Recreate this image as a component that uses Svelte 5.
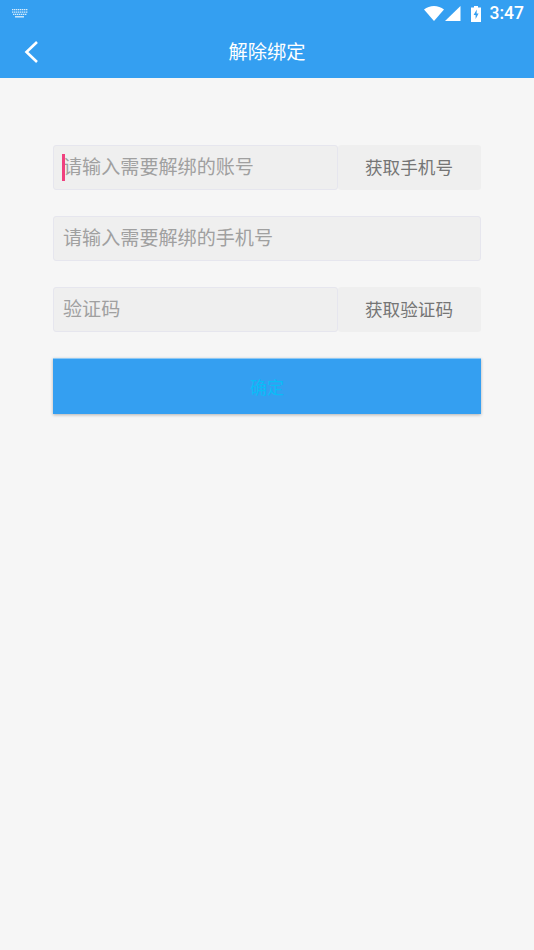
<script>
  const rows = [
    { text: '请输入需要解绑的账号', action: '获取手机号', caret: true },
    { text: '请输入需要解绑的手机号' },
    { text: '验证码', action: '获取验证码' }
  ];
</script>

<div class="page">
  <header class="head">
    <div class="status">
      <svg class="kbd" width="16" height="9" viewBox="0 0 16 9" aria-hidden="true">
        <g stroke="#fff" fill="none">
          <path d="M0 .7h16M0 3.2h16" stroke-width="1.3" stroke-dasharray="1.4 .6" opacity="0.8"/>
          <path d="M1 5.4h14" stroke-width="1.3" stroke-dasharray="1.4 .6" opacity="0.8"/>
          <path d="M3 7.8h9" stroke-width="1.4" opacity="0.8"/>
        </g>
      </svg>
      <div class="sys">
        <svg width="20" height="15" viewBox="0 0 20 15" aria-hidden="true"><path d="M0 3.6C2.9 1.2 6.3 0 10 0s7.1 1.2 10 3.6L10 15z" fill="#fff"/></svg>
        <svg width="16" height="15" viewBox="0 0 16 15" aria-hidden="true"><path d="M15.5 0v15H0z" fill="#fff"/></svg>
        <svg class="bat" width="10" height="16" viewBox="0 0 10 16" aria-hidden="true"><path fill-rule="evenodd" d="M3 0h4v1.5h3V16H0V1.5h3zM5.8 3.5 2.6 9h2v4l3-5.6H5.6z" fill="#fff"/></svg>
        <span class="time">3:47</span>
      </div>
    </div>
    <div class="nav">
      <svg class="back" width="16" height="24" viewBox="0 0 16 24" aria-hidden="true"><path d="M14 2 3.5 12 14 22" fill="none" stroke="#fff" stroke-width="2.6"/></svg>
      <h1>解除绑定</h1>
    </div>
  </header>

  <main class="form">
    {#each rows as row}
      <div class="row">
        <div class="field">
          {#if row.caret}<i class="caret"></i>{/if}
          <span class="label">{row.text}</span>
        </div>
        {#if row.action}<div class="action"><span class="label">{row.action}</span></div>{/if}
      </div>
    {/each}
    <div class="submit"><span class="label">确定</span></div>
  </main>
</div>

<style>
  :global(body) { margin: 0; background: #f6f6f6; }
  .page {
    min-height: 950px;
    background: #f6f6f6;
    font-family: "Noto Sans CJK SC", "Noto Sans", sans-serif;
  }
  .head { background: #349ff1; height: 78px; color: #fff; }
  .status {
    height: 27px;
    display: flex;
    align-items: center;
    justify-content: space-between;
    padding: 0 10px 0 12px;
  }
  .kbd { margin-top: -1px; }
  .sys { display: flex; align-items: center; }
  .sys svg:nth-child(1) { margin-right: 1px; }
  .bat { margin-left: 10px; }
  .time {
    margin-left: 9px;
    font: 500 17.5px Roboto, sans-serif;
    line-height: 25px;
  }
  .nav {
    height: 51px;
    position: relative;
    display: flex;
    align-items: center;
    justify-content: center;
  }
  .back { position: absolute; left: 23px; top: 13px; }
  h1 { margin: 0 0 1px; font-size: 19.25px; font-weight: 400; line-height: 1; }
  .form {
    padding: 67px 53px 0;
    display: flex;
    flex-direction: column;
    gap: 26.5px;
  }
  .row { display: flex; height: 44.5px; }
  .label { line-height: 1; margin-top: -1px; }
  .field {
    position: relative;
    flex: 1;
    box-sizing: border-box;
    display: flex;
    align-items: center;
    padding: 0 0 0 9px;
    background: #efefef;
    border: 1px solid #e6e6ee;
    border-radius: 3px;
    color: #a0a0a0;
    font-size: 19.1px;
  }
  .caret {
    position: absolute;
    left: 8px;
    top: 8px;
    width: 3px;
    height: 27px;
    background: #f0407f;
  }
  .action {
    width: 143px;
    display: flex;
    align-items: center;
    justify-content: center;
    background: #efefef;
    border-radius: 3px;
    color: #757575;
    font-size: 17.6px;
    padding-right: 1px;
    box-sizing: border-box;
  }
  .submit {
    height: 56px;
    display: flex;
    align-items: center;
    justify-content: center;
    background: #349ff1;
    color: #0abcf7;
    font-size: 17px;
    box-sizing: border-box;
    border-top: 1px solid #8cc8f5;
    box-shadow: 0 1px 3px rgba(0, 0, 0, 0.28);
  }
</style>
